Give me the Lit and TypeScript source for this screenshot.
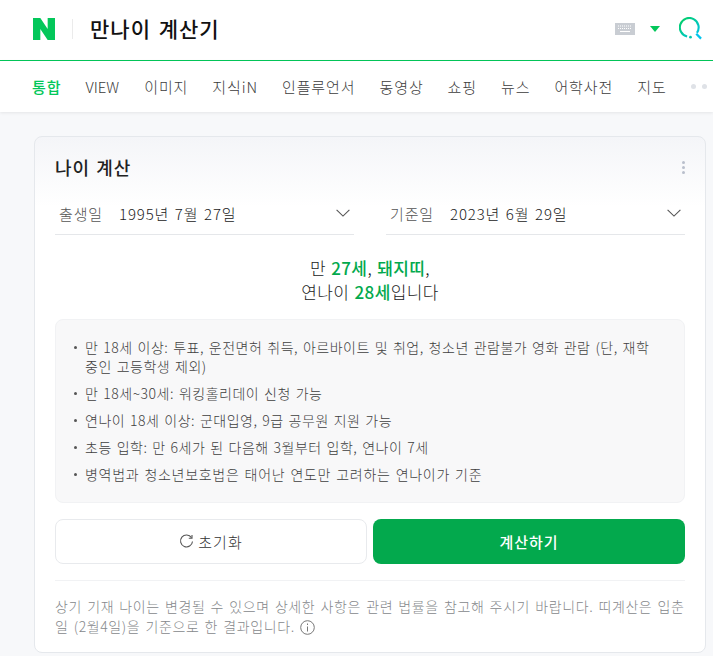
import { LitElement, html, css } from "lit";
import { customElement } from "lit/decorators.js";

const chevron = html`<svg class="chev" width="14" height="8" viewBox="0 0 14 8" fill="none"><path d="M.6.8L7 7.1 13.4.8" stroke="#555" stroke-width="1.1"/></svg>`;

@customElement("app-root")
export class AppRoot extends LitElement {
  static styles = css`
    :host { display: block; width: 713px; height: 656px; overflow: hidden; background: #f7f8fa;
      font-family: "Noto Sans CJK KR", "Liberation Sans", sans-serif; color: #222; }
    * { box-sizing: border-box; }
    .top { height: 61px; background: #fff; border-bottom: 1px solid #03c75a; display: flex; align-items: center; padding: 0 11px 0 33px; }
    .logo { margin-bottom: 3px; }
    .sep { width: 1px; height: 20px; background: #ebebeb; margin: 0 17px 3px 17px; }
    .title { font-size: 21px; font-weight: 500; color: #111; line-height: 28px; flex: 1; letter-spacing: 1px; word-spacing: 2px; margin-bottom: 5px; }
    .kb { margin-right: 15px; margin-bottom: 2px; }
    .caret { margin-right: 19px; margin-bottom: 3px; }
    .search { margin-bottom: 3px; }
    .nav { height: 51px; background: #fff; display: flex; align-items: center; padding-left: 32px; gap: 24px; box-shadow: 0 1px 3px rgba(0,0,0,.08); font-size: 15px; color: #3c3c3c; white-space: nowrap; overflow: hidden; letter-spacing: .9px; font-weight: 300; }
    .nav .on { color: #03c75a; font-weight: 500; }
    .nav .lat { letter-spacing: 0; margin-right: 1px; }
    .dots { display: flex; gap: 6px; }
    .dots i { width: 5px; height: 5px; border-radius: 50%; background: #dfe2e7; }
    .card { margin: 24px 7px 0 34px; height: 517px; background: #fff; border: 1px solid #e5e8ec; border-radius: 8px; padding: 0 20px;
      background-image: linear-gradient(#f4f5f8, #fff 70px); background-repeat: no-repeat; }
    .head { height: 60px; display: flex; align-items: center; justify-content: space-between; }
    .head h2 { margin: 0; font-size: 18px; font-weight: 500; color: #222; letter-spacing: .9px; word-spacing: 1.5px; }
    .more { display: flex; flex-direction: column; gap: 2px; }
    .more i { width: 3px; height: 3px; border-radius: 50%; background: #b9bfcc; }
    .dates { display: flex; gap: 32px; }
    .date { flex: 1; height: 38px; border-bottom: 1px solid #e5e7ea; display: flex; align-items: center; padding: 0 4px 5px 4px; font-size: 15px; color: #222; letter-spacing: .85px; word-spacing: 1.5px; font-weight: 300; }
    .date label { color: #555; width: 60px; }
    .date span { flex: 1; }
    .result { margin-top: 21px; text-align: center; font-size: 17px; line-height: 24px; color: #222; letter-spacing: .4px; word-spacing: 1px; font-weight: 300; }
    .result b { font-weight: 500; color: #03a94d; }
    .info { margin-top: 15px; height: 184px; background: #f8f8f9; border: 1px solid #f1f2f4; border-radius: 8px; padding: 18px 30px 0 17px; }
    .info ul { margin: 0; padding: 0; list-style: none; font-size: 14px; line-height: 19px; color: #3f3f3f; letter-spacing: .5px; word-spacing: 1.3px; font-weight: 300; }
    .info li { position: relative; padding-left: 12px; margin-bottom: 8px; }
    .info li.wide { letter-spacing: .7px; }
    .info li::before { content: ""; position: absolute; left: 1px; top: 8px; width: 3px; height: 3px; border-radius: 50%; background: #555; }
    .btns { margin-top: 16px; display: flex; gap: 6px; }
    .btn { height: 45px; border-radius: 8px; display: flex; align-items: center; justify-content: center; font-size: 15px; gap: 4px; letter-spacing: 1px; }
    .reset { width: 312px; border: 1px solid #e8eaed; color: #333; background: #fff; font-weight: 300; }
    .calc { flex: 1; background: #03a94d; color: #fff; font-weight: 500; }
    .note { margin-top: 16px; border-top: 1px solid #f1f2f4; padding-top: 15px; font-size: 14px; line-height: 20px; color: #86888b; letter-spacing: .6px; word-spacing: 1.5px; font-weight: 300; }
    .note svg { vertical-align: -3px; }
  `;

  render() {
    return html`
      <div class="top">
        <svg class="logo" width="22" height="22" viewBox="0 0 24 22" preserveAspectRatio="none"><path fill="#03c75a" d="M0 0h8l8 11V0h8v22h-8L8 11v11H0z"/></svg>
        <div class="sep"></div>
        <div class="title">만나이 계산기</div>
        <svg class="kb" width="20" height="12" viewBox="0 0 20 12"><rect width="20" height="12" fill="#c9cdd3"/><path d="M3 3h14M3 5.5h14" stroke="#fff" stroke-dasharray="1 1"/><path d="M5 8.5h10" stroke="#fff"/></svg>
        <svg class="caret" width="10" height="6" viewBox="0 0 10 6"><path d="M0 0h10L5 6z" fill="#03c75a"/></svg>
        <svg class="search" width="23" height="23" viewBox="0 0 24 24" fill="none"><defs><linearGradient id="g" x1="0" y1="0" x2="1" y2="1"><stop offset="0" stop-color="#03cf5d"/><stop offset="1" stop-color="#00c4ee"/></linearGradient></defs>
          <path d="M8.5 20.4A9.8 9.8 0 1 1 18.7 16.5" stroke="url(#g)" stroke-width="2.2"/><circle cx="12" cy="21" r="1.4" fill="#00c8b0"/><path d="M18 17.5l5 5" stroke="#00c4ee" stroke-width="2.4"/></svg>
      </div>
      <div class="nav">
        <span class="on">통합</span><span class="lat">VIEW</span><span>이미지</span><span>지식iN</span><span>인플루언서</span><span>동영상</span><span>쇼핑</span><span>뉴스</span><span>어학사전</span><span>지도</span>
        <span class="dots"><i></i><i></i><i></i><i></i></span>
      </div>
      <div class="card">
        <div class="head"><h2>나이 계산</h2><div class="more"><i></i><i></i><i></i></div></div>
        <div class="dates">
          <div class="date"><label>출생일</label><span>1995년 7월 27일</span>${chevron}</div>
          <div class="date"><label>기준일</label><span>2023년 6월 29일</span>${chevron}</div>
        </div>
        <div class="result">만 <b>27세</b>, <b>돼지띠</b>,<br>연나이 <b>28세</b>입니다</div>
        <div class="info"><ul>
          <li>만 18세 이상: 투표, 운전면허 취득, 아르바이트 및 취업, 청소년 관람불가 영화 관람 (단, 재학 중인 고등학생 제외)</li>
          <li>만 18세~30세: 워킹홀리데이 신청 가능</li>
          <li>연나이 18세 이상: 군대입영, 9급 공무원 지원 가능</li>
          <li>초등 입학: 만 6세가 된 다음해 3월부터 입학, 연나이 7세</li>
          <li class="wide">병역법과 청소년보호법은 태어난 연도만 고려하는 연나이가 기준</li>
        </ul></div>
        <div class="btns">
          <div class="btn reset"><svg width="15" height="15" viewBox="0 0 15 15" fill="none"><path d="M12.5 3.6A6 6 0 1 0 13.5 7.5" stroke="#555" stroke-width="1.1"/><path d="M13 1v3.2H9.8" stroke="#555" stroke-width="1.1"/></svg>초기화</div>
          <div class="btn calc">계산하기</div>
        </div>
        <div class="note">상기 기재 나이는 변경될 수 있으며 상세한 사항은 관련 법률을 참고해 주시기 바랍니다. 띠계산은 입춘일 (2월4일)을 기준으로 한 결과입니다. <svg width="15" height="15" viewBox="0 0 15 15" fill="none"><circle cx="7.5" cy="7.5" r="6.8" stroke="#777"/><path d="M7.5 6.5v5M7.5 3.5v1.5" stroke="#777"/></svg></div>
      </div>
    `;
  }
}
